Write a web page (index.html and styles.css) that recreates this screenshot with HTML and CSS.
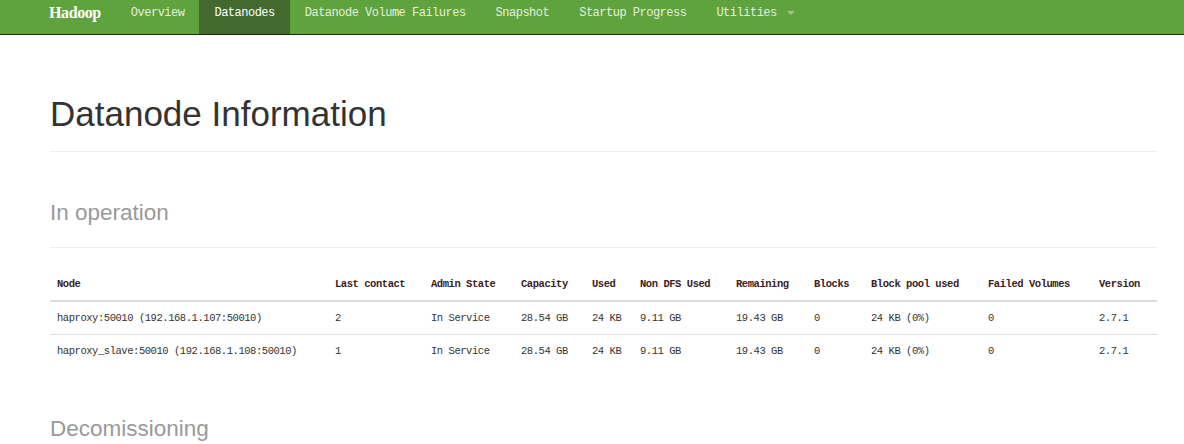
FILE: index.html
```html
<!DOCTYPE html>
<html>
<head>
<meta charset="utf-8">
<title>Datanode Information</title>
<link rel="stylesheet" href="styles.css">
</head>
<body>
<nav class="navbar">
  <div class="nav-inner">
    <a class="brand">Hadoop</a>
    <ul class="nav">
      <li><a>Overview</a></li>
      <li class="active"><a>Datanodes</a></li>
      <li><a>Datanode Volume Failures</a></li>
      <li><a>Snapshot</a></li>
      <li><a>Startup Progress</a></li>
      <li><a>Utilities <span class="caret"></span></a></li>
    </ul>
  </div>
</nav>
<main class="container">
  <div class="page-header main-header">
    <h1>Datanode Information</h1>
  </div>
  <div class="page-header section-header">
    <h2>In operation</h2>
  </div>
  <table class="table">
    <colgroup>
      <col class="c-node"><col class="c-contact"><col class="c-admin"><col class="c-cap"><col class="c-used"><col class="c-nondfs"><col class="c-rem"><col class="c-blocks"><col class="c-pool"><col class="c-failed"><col>
    </colgroup>
    <thead>
      <tr>
        <th>Node</th><th>Last contact</th><th>Admin State</th><th>Capacity</th><th>Used</th><th>Non DFS Used</th><th>Remaining</th><th>Blocks</th><th>Block pool used</th><th>Failed Volumes</th><th>Version</th>
      </tr>
    </thead>
    <tbody>
      <tr>
        <td>haproxy:50010 (192.168.1.107:50010)</td><td>2</td><td>In Service</td><td>28.54 GB</td><td>24 KB</td><td>9.11 GB</td><td>19.43 GB</td><td>0</td><td>24 KB (0%)</td><td>0</td><td>2.7.1</td>
      </tr>
      <tr>
        <td>haproxy_slave:50010 (192.168.1.108:50010)</td><td>1</td><td>In Service</td><td>28.54 GB</td><td>24 KB</td><td>9.11 GB</td><td>19.43 GB</td><td>0</td><td>24 KB (0%)</td><td>0</td><td>2.7.1</td>
      </tr>
    </tbody>
  </table>
  <div class="page-header section-header decom">
    <h2>Decomissioning</h2>
  </div>
</main>
</body>
</html>
```
FILE: styles.css
```css
html, body {
  margin: 0;
  padding: 0;
  background: #fff;
  overflow: hidden;
}
body {
  font-family: "Liberation Sans", Arial, sans-serif;
  color: #333;
}
.navbar {
  background: #5fa33e;
  border-bottom: 1px solid #1d2a15;
  height: 34px;
}
.nav-inner {
  display: flex;
  align-items: stretch;
  height: 34px;
  padding-left: 35px;
}
.brand {
  font-family: "Liberation Serif", "Times New Roman", serif;
  font-size: 16px;
  font-weight: bold;
  color: #fff;
  padding: 4px 15px 0 14px;
  line-height: 18px;
  letter-spacing: -0.4px;
}
.nav {
  display: flex;
  list-style: none;
  margin: 0;
  padding: 0;
}
.nav li {
  display: flex;
}
.nav a {
  font-family: "Liberation Mono", "Courier New", monospace;
  font-size: 12px;
  letter-spacing: -0.5px;
  color: #e4eedf;
  padding: 6px 15px 0 15px;
  line-height: 14px;
  white-space: pre;
}
.nav .active a {
  background: #44692f;
  color: #fff;
}
.caret {
  display: inline-block;
  width: 0;
  height: 0;
  border-left: 4px solid transparent;
  border-right: 4px solid transparent;
  border-top: 4px solid #9bc489;
  vertical-align: middle;
  margin-left: 4px;
}
.container {
  padding-left: 50px;
  width: 1107px;
}
.page-header {
  border-bottom: 1px solid #eee;
}
.main-header {
  margin-top: 59px;
  padding-bottom: 17px;
}
h1 {
  margin: 0;
  font-size: 35px;
  font-weight: normal;
  line-height: 40px;
  color: #333;
}
.section-header {
  margin-top: 48px;
  padding-bottom: 21px;
}
h2 {
  margin: 0;
  font-size: 22.5px;
  font-weight: normal;
  line-height: 26px;
  color: #999;
}
.decom {
  margin-top: 49px;
}
.table {
  margin-top: 20px;
  width: 1107px;
  border-collapse: collapse;
  table-layout: fixed;
  font-family: "Liberation Mono", "Courier New", monospace;
  font-size: 10.5px;
  letter-spacing: -0.45px;
  color: #333;
}
.c-node { width: 278px; }
.c-contact { width: 96px; }
.c-admin { width: 90px; }
.c-cap { width: 71px; }
.c-used { width: 48px; }
.c-nondfs { width: 96px; }
.c-rem { width: 78px; }
.c-blocks { width: 57px; }
.c-pool { width: 117px; }
.c-failed { width: 111px; }
.table th, .table td {
  text-align: left;
  padding: 8px 7px;
  line-height: 16px;
  white-space: nowrap;
}
.table th {
  font-weight: bold;
  color: #3a2222;
  border-bottom: 2px solid #ddd;
}
.table td {
  border-top: 1px solid #ddd;
}
.table tbody tr:first-child td {
  border-top: 0;
}
```
